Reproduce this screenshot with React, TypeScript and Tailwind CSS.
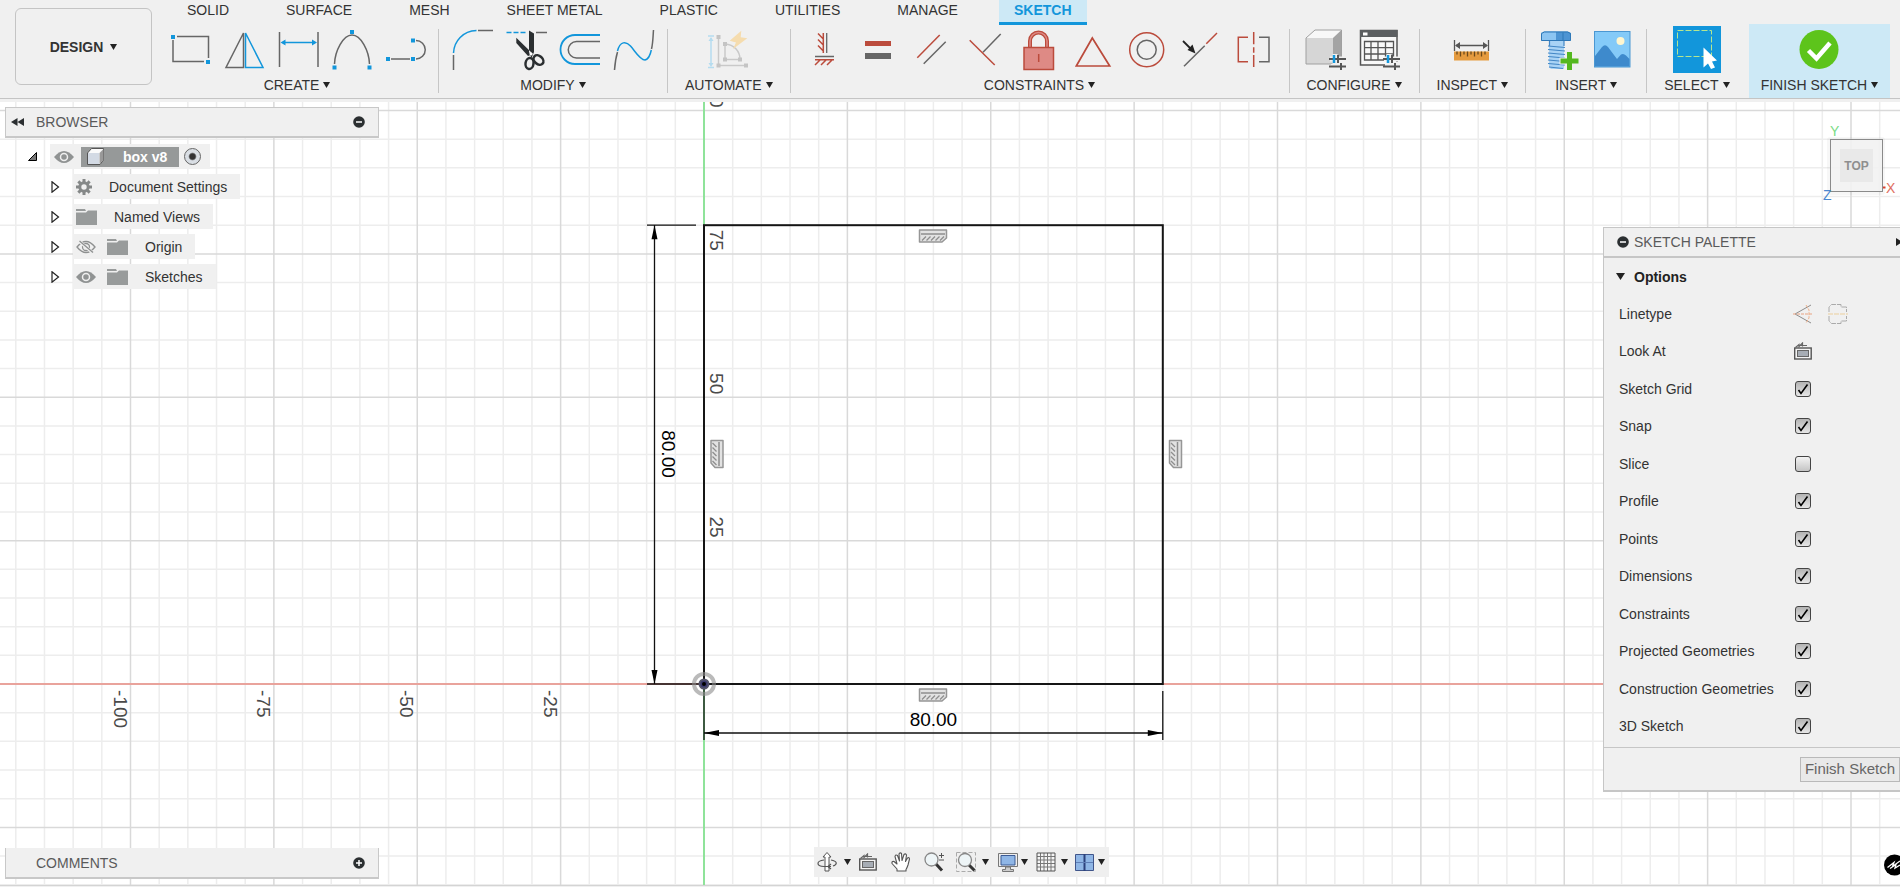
import React, { useState } from 'react';

const GRAY = '#666666';
const BLUE = '#1296db';
const RED = '#bb4b3c';

const tabs = ['SOLID', 'SURFACE', 'MESH', 'SHEET METAL', 'PLASTIC', 'UTILITIES', 'MANAGE', 'SKETCH'];

const Caret: React.FC = () => (
  <svg width="7" height="6" viewBox="0 0 7 6" className="shrink-0" aria-hidden="true">
    <path d="M0 0h7L3.5 6z" fill="#222" />
  </svg>
);

const Icon: React.FC<{ children: React.ReactNode }> = ({ children }) => (
  <svg width="54" height="44" viewBox="0 0 54 44" fill="none" strokeWidth="1.5" aria-hidden="true">
    {children}
  </svg>
);

const Dot: React.FC<{ x: number; y: number }> = ({ x, y }) => (
  <rect x={x - 2} y={y - 2} width="4" height="4" fill={BLUE} />
);

const Sliders: React.FC<{ x: number }> = ({ x }) => (
  <g>
    <path d={`M${x} 30h16M${x + 1} 37.5h15M${x + 5} 25v10M${x + 12} 33v9`} stroke="#f0f0f0" strokeWidth="5" />
    <path d={`M${x - 1} 30h17M${x - 1} 37.5h17`} stroke="#555" strokeWidth="2" />
    <path d={`M${x + 4} 26v8`} stroke={BLUE} strokeWidth="2.5" />
    <path d={`M${x + 8} 26v8M${x + 11} 34v7`} stroke="#555" strokeWidth="2" />
  </g>
);

const createTools: Record<string, React.ReactNode> = {
  Rectangle: (
    <>
      <path d="M14 7.5H45.5V29M10 11V32.5H41" stroke={GRAY} />
      <Dot x={10} y={8} /><Dot x={45} y={33} />
    </>
  ),
  Mirror: (
    <>
      <path d="M26.5 4V38.5H9z" stroke={GRAY} />
      <path d="M28.5 4V38.5H46z" stroke={BLUE} />
    </>
  ),
  'Sketch Dimension': (
    <>
      <path d="M8.5 3V38M47 3V38" stroke={GRAY} />
      <path d="M12 13.5H44" stroke={BLUE} />
      <path d="M9.500 13.500l5-3v6zM46 13.500l-5-3v6z" fill={BLUE} />
    </>
  ),
  Arc: (
    <>
      <path d="M9.500 35C10 22 18 6 27 6S44 22 44.500 35" stroke={GRAY} />
      <Dot x={9.5} y={38.5} /><Dot x={27} y={3} /><Dot x={44.5} y={38.5} />
    </>
  ),
  Slot: (
    <>
      <path d="M12 30H31M37 11.500A9.250 9.250 0 0 1 37 30" stroke={GRAY} />
      <Dot x={9} y={30} /><Dot x={34} y={30} /><Dot x={34} y={11.5} />
    </>
  ),
};

const modifyTools: Record<string, React.ReactNode> = {
  Fillet: (
    <>
      <path d="M7.500 24C8 12 17 2 30.500 1.500" stroke={BLUE} />
      <path d="M7.500 26V41M32 1.500H47" stroke={GRAY} />
    </>
  ),
  Trim: (
    <>
      <path d="M6.500 3.500H26" stroke={BLUE} strokeDasharray="5 2" />
      <path d="M36 3.500H47" stroke={GRAY} />
      <path d="M29 1.500L34 4.500V23L31.500 29L29 23zM16.300 8.700V14L28 27L33 25z" fill="#2b2f31" />
      <ellipse cx="29.500" cy="34.500" rx="4" ry="5.500" stroke="#2b2f31" strokeWidth="2.500" transform="rotate(8 29.500 34.500)" />
      <ellipse cx="38.500" cy="31" rx="4" ry="5.500" stroke="#2b2f31" strokeWidth="2.500" transform="rotate(-48 38.500 31)" />
      <circle cx="31" cy="25" r="1.500" fill="#fff" />
    </>
  ),
  Offset: (
    <>
      <path d="M46 6H21a14.500 14.500 0 0 0 0 29H46" stroke={BLUE} strokeWidth="1.800" />
      <path d="M46 12.500H22.500a8.250 8.250 0 0 0 0 16.500H46" stroke={GRAY} />
    </>
  ),
  Spline: (
    <>
      <path d="M6.500 41C7 34 8 28 9.500 23M43.500 20C45 14 45 7 45.500 1" stroke={GRAY} />
      <path d="M9.500 22C12 12 18 12 22.500 17S32 31 37 31C41 30 42.500 25 43.300 21" stroke={BLUE} />
    </>
  ),
};

const automateTools: Record<string, React.ReactNode> = {
  'Auto Constrain': (
    <>
      <path d="M8 9V36M5 7H11M5 38.500H11" stroke="#b5dcef" />
      <path d="M8 8l-2.500 4h5zM8 38l-2.500-4h5z" fill="#b5dcef" />
      <path d="M15.500 8V36.500H43M22 15V30.500H37C37 22 31 15.500 22 15" stroke="#c9c9c9" />
      <path d="M13.500 6h4v4h-4zM13.500 34.500h4v4h-4zM41 34.500h4v4h-4zM20 13h4v4h-4zM20 28.500h4v4h-4zM35 28.500h4v4h-4z" fill="#c4c4c4" />
      <path d="M38.300 1.700L26.700 11.700L33 13.500L30 20L44.300 9.300L37.700 8.300z" fill="#f5dcae" />
    </>
  ),
};

const constraintTools: Record<string, React.ReactNode> = {
  'Horizontal/Vertical': (
    <>
      <path d="M25.300 4V24M20 4.500L25.300 10M20 10.500L25.300 16M20 16.500L25.300 22M17 30.700H36M22 31L17 36M28 31L23 36M34 31L29 36" stroke={RED} />
      <path d="M28.700 4V24M17 27.500H36" stroke={GRAY} strokeWidth="1.300" />
    </>
  ),
  Equal: (
    <>
      <path d="M13 12h26v5H13z" fill={RED} />
      <path d="M13 24h26v6H13z" fill={GRAY} />
    </>
  ),
  Parallel: (
    <>
      <path d="M11.300 28.700L33.700 6" stroke={RED} />
      <path d="M17.700 34.700L39.700 12.700" stroke={GRAY} />
    </>
  ),
  Perpendicular: (
    <>
      <path d="M23 23.300L40.700 5" stroke={GRAY} />
      <path d="M9.700 11.300L34.700 36" stroke={RED} />
    </>
  ),
  Fix: (
    <>
      <path d="M16 18V12a8.500 8.500 0 0 1 17 0V18" stroke={RED} strokeWidth="4" />
      <path d="M16 18V12a8.500 8.500 0 0 1 17 0V18" stroke="#de8a85" strokeWidth="1.500" />
      <rect x="10" y="18.500" width="29.500" height="22" fill="#de8a85" stroke={RED} />
      <path d="M24.700 25V33" stroke={RED} />
    </>
  ),
  Tangent: <path d="M24.300 9L41.700 37H8.300z" stroke={RED} strokeWidth="1.700" />,
  Concentric: (
    <>
      <circle cx="24.700" cy="20.700" r="17" stroke={RED} />
      <circle cx="24.700" cy="20.700" r="9.500" stroke={GRAY} />
    </>
  ),
  Midpoint: (
    <>
      <path d="M8 37.300L28.700 16.700" stroke={GRAY} />
      <path d="M30.300 14.700L41 4" stroke={RED} />
      <path d="M7 12L15 20" stroke="#222" strokeWidth="1.800" />
      <path d="M19.500 24.500l-8-3.500 5-5.500z" fill="#222" />
    </>
  ),
  Symmetry: (
    <>
      <path d="M18 8.300H8.300V32.700H18M23.700 3V15.300M23.700 18.300V23.700M23.700 26V38" stroke={RED} />
      <path d="M29 8.300H39V32.700H29" stroke={GRAY} />
    </>
  ),
};

const configureTools: Record<string, React.ReactNode> = {
  'Configure Model': (
    <>
      <path d="M5 9h27v26H5z" fill="#d6d6d6" />
      <path d="M5 9L14 1H40.500L32 9z" fill="#f8f8f8" />
      <path d="M32 9L40.500 1V28L32 35z" fill="#a4a4a4" />
      <path d="M5 9L14 1H40.500V28L32 35H5z" stroke="#a0a0a0" strokeWidth="1" />
      <Sliders x={29} />
    </>
  ),
  'Configuration Table': (
    <>
      <path d="M5.500 1.500H42V36H5.500z" fill="#f8f8f8" stroke="#555" />
      <path d="M5 1H42.500V8H5z" fill="#5c5f61" />
      <path d="M8 3.500h4.500v3H8z" fill="#fff" />
      <path d="M9.500 12.500H38.500V31H9.500zM9.500 18.700H38.500M9.500 25H38.500M16 12.500V31M23 12.500V31M30.500 12.500V31" stroke="#555" strokeWidth="1.300" />
      <Sliders x={29} />
    </>
  ),
};

const inspectTools: Record<string, React.ReactNode> = {
  Measure: (
    <>
      <path d="M8.500 11V22M42.500 11V22M10 16.500H41" stroke="#555" strokeWidth="1.300" />
      <path d="M9 16.500l5-3.500v7zM42 16.500l-5-3.500v7z" fill="#555" />
      <path d="M8 22.500h35v9H8z" fill="#e59b3f" />
      <path d="M11 22.500v3M14.500 22.500v5M18 22.500v3M21.500 22.500v5M25 22.500v3M28.500 22.500v5M32 22.500v3M35.500 22.500v5M39 22.500v3" stroke="#6b4a1c" strokeWidth="1.300" />
    </>
  ),
};

const insertTools: Record<string, React.ReactNode> = {
  'Insert Fastener': (
    <>
      <path d="M8 4l3-1.500h24L38 4v7.500H8z" fill="#4d94d3" />
      <path d="M8 4l3-1.500h12V11.500H8z" fill="#8cc5f2" />
      <path d="M8.500 4.500l3-1.500h23l3 1.500V11.500h-29zM30 3.500V11.500" stroke="#2f78b7" strokeWidth="1" />
      <path d="M16 12h15v28H18l-2-2z" fill="#a9d3f5" />
      <path d="M15 17l17 1.500M15 20.500l17 1.500M15 24l17 1.500M15 27.500l17 1.500M15 31l17 1.500M15 34.500l17 1.500M16 38l14 1.500M16.500 12V17M31 12V17" stroke="#4286c5" strokeWidth="1.200" />
      <path d="M36.500 22V42M26.500 32H46.500" stroke="#f0f0f0" strokeWidth="7" />
      <path d="M36.500 23V41M27.500 32H45.500" stroke="#54b81f" strokeWidth="5" />
    </>
  ),
  'Insert Image': (
    <>
      <rect x="7.500" y="2.500" width="35.500" height="35.500" fill="#84caf8" stroke="#4b97d2" strokeWidth="1" />
      <circle cx="33.500" cy="12" r="4" fill="#fff6d0" />
      <path d="M8 27L15 18Q18 14.500 21 18L30 30L34 25.500Q36.500 24 39 26.500L42.500 30V37.500H8z" fill="#3e8acc" />
    </>
  ),
};

interface GroupProps {
  label: string;
  tools: Record<string, React.ReactNode>;
}

const ToolGroup: React.FC<GroupProps> = ({ label, tools }) => (
  <section className="mt-1 mb-[5px] flex flex-col items-center border-r border-[#c6c6c6]" aria-label={label}>
    <div className="flex pr-[5px] pl-[7px]">
      {Object.entries(tools).map(([name, art]) => (
        <button key={name} type="button" aria-label={name} className="h-11 w-[54px]">
          <Icon>{art}</Icon>
        </button>
      ))}
    </div>
    <GroupLabel label={label} />
  </section>
);

const GroupLabel: React.FC<{ label: string }> = ({ label }) => (
  <button type="button" className="mt-1 flex items-center gap-1 px-[17px] leading-4 whitespace-nowrap">
    {label}
    <Caret />
  </button>
);

const Header: React.FC = () => (
  <header className="flex shrink-0 border-b-[3px] border-[#f0f0f0]">
    <div className="flex w-full border-b border-[#c4c4c4] bg-[#f0f0f0]">
      <button
        type="button"
        className="mt-2 mr-1 mb-[13px] ml-[15px] flex w-[137px] shrink-0 items-center justify-center gap-[7px] rounded-md border border-[#c4c4c4] font-bold"
      >
        DESIGN
        <Caret />
      </button>
      <div className="min-w-0 flex-1">
        <nav className="flex h-[25px] gap-[25px] pl-[15px]">
          {tabs.map((tab) => (
            <button
              key={tab}
              type="button"
              className={
                tab === 'SKETCH'
                  ? 'border-b-[3px] border-[#1296db] bg-[#cde9f6] px-[15px] pt-[2px] pb-1 leading-4 font-bold text-[#1296db]'
                  : 'border-b-[3px] border-transparent px-4 pt-[2px] pb-1 leading-4 whitespace-nowrap'
              }
            >
              {tab}
            </button>
          ))}
        </nav>
        <div className="flex h-[73px]">
          <ToolGroup label="CREATE" tools={createTools} />
          <ToolGroup label="MODIFY" tools={modifyTools} />
          <ToolGroup label="AUTOMATE" tools={automateTools} />
          <ToolGroup label="CONSTRAINTS" tools={constraintTools} />
          <ToolGroup label="CONFIGURE" tools={configureTools} />
          <ToolGroup label="INSPECT" tools={inspectTools} />
          <ToolGroup label="INSERT" tools={insertTools} />
          <section className="mt-px flex flex-col items-center" aria-label="SELECT">
            <button type="button" aria-label="Select" className="h-[47px] w-12 bg-[#1296db]">
              <svg width="48" height="47" viewBox="0 0 48 47" fill="none" aria-hidden="true">
                <rect x="4.500" y="4.500" width="34" height="26" stroke="#b5e68f" strokeDasharray="6 2" />
                <path d="M30.500 21.500V41.500L35 37.500L38 43L42 41.500L39 35.500L44 34.500z" fill="#fff" />
              </svg>
            </button>
            <GroupLabel label="SELECT" />
          </section>
          <section className="-mt-px ml-0.5 flex flex-col items-center bg-[#cde9f6]" aria-label="FINISH SKETCH">
            <button type="button" aria-label="Finish Sketch" className="mt-[5px] h-11 w-[54px]">
              <Icon>
                <circle cx="27" cy="20.500" r="19.500" fill="#5dc41b" />
                <path d="M16.500 21.500l8 8L38 14" stroke="#fff" strokeWidth="4.500" />
              </Icon>
            </button>
            <button type="button" className="mt-1 flex items-center gap-1 px-3 leading-4 whitespace-nowrap">
              FINISH SKETCH
              <Caret />
            </button>
          </section>
        </div>
      </div>
    </div>
  </header>
);

// Sketch space: pixels per unit and where the origin sits on the canvas
const UNIT = 5.735;
const ORIGIN = { x: 704, y: 582 };
const SIZE = 80 * UNIT;

const ConstraintBadge: React.FC<{ transform: string }> = ({ transform }) => (
  <g transform={transform}>
    <path d="M-13.500 -6H13.500V2L9 6H-13.500z" fill="#e2e2e2" stroke="#969696" strokeWidth="1.500" strokeLinejoin="round" />
    <path d="M-12 -2H12" stroke="#8e8e8e" strokeWidth="1.500" />
    <path d="M-11 4.500l4-4M-6.500 4.500l4-4M-2 4.500l4-4M2.500 4.500l4-4M7 4.500l4-4" stroke="#8e8e8e" strokeWidth="1.300" />
  </g>
);

const Canvas: React.FC = () => {
  const { x: ox, y: oy } = ORIGIN;
  const right = ox + SIZE;
  const top = oy - SIZE;
  const columns = Array.from({ length: 90 }, (_, i) => i - 24);
  const rows = Array.from({ length: 60 }, (_, i) => i - 30);
  const minor = '#ededed';
  const major = '#d9d9d9';

  return (
    <svg className="absolute inset-0 h-full w-full" fontFamily="'Liberation Sans', sans-serif" fontSize="19" aria-label="Sketch canvas">
      <g strokeWidth="1.500">
        {columns.filter((i) => i % 5).map((i) => (
          <line key={`c${i}`} x1={ox + i * 5 * UNIT} x2={ox + i * 5 * UNIT} y1="0" y2="100%" stroke={minor} />
        ))}
        {rows.filter((i) => i % 5).map((i) => (
          <line key={`r${i}`} x1="0" x2="100%" y1={oy + i * 5 * UNIT} y2={oy + i * 5 * UNIT} stroke={minor} />
        ))}
        {columns.filter((i) => i % 5 === 0).map((i) => (
          <line key={`C${i}`} x1={ox + i * 5 * UNIT} x2={ox + i * 5 * UNIT} y1="0" y2="100%" stroke={major} />
        ))}
        {rows.filter((i) => i % 5 === 0).map((i) => (
          <line key={`R${i}`} x1="0" x2="100%" y1={oy + i * 5 * UNIT} y2={oy + i * 5 * UNIT} stroke={major} />
        ))}
      </g>
      <line x1="0" x2="100%" y1={oy} y2={oy} stroke="#e9a39c" strokeWidth="2" />
      <line x1={ox} x2={ox} y1="0" y2="100%" stroke="#8fe39a" strokeWidth="2" />

      <g fill="#4a4a4a">
        {[25, 50, 75, 100].map((n) => (
          <text key={n} textAnchor="end" transform={`translate(${ox + 6} ${oy - n * UNIT - 3}) rotate(90)`}>{n}</text>
        ))}
        {[-25, -50, -75, -100].map((n) => (
          <text key={n} transform={`translate(${ox + n * UNIT - 17} ${oy + 6}) rotate(90)`}>{n}</text>
        ))}
      </g>

      <rect x={ox} y={top} width={SIZE} height={SIZE} fill="none" stroke="#151515" strokeWidth="2" />

      <g stroke="#111" strokeWidth="1.300">
        <path d={`M647 ${top}H696M647 ${oy}H${ox}M654.500 ${top}V${oy}`} />
        <path d={`M${ox} ${oy}V638M${right} 589V638M${ox} 631H${right}`} />
      </g>
      <g fill="#000">
        <path d={`M654.500 ${top}l-3 14h6zM654.500 ${oy}l-3-14h6z`} />
        <path d={`M${ox} 631l15-3v6zM${right} 631l-15-3v6z`} />
        <text x={ox + SIZE / 2} y="624" textAnchor="middle">80.00</text>
        <text textAnchor="middle" transform="translate(662 352) rotate(90)">80.00</text>
      </g>

      <ConstraintBadge transform="translate(933 134)" />
      <ConstraintBadge transform="translate(933 593)" />
      <ConstraintBadge transform="translate(717 352) rotate(90)" />
      <ConstraintBadge transform="translate(1175.500 352) rotate(90)" />

      <circle cx={ox} cy={oy} r="10" fill="none" stroke="#8c8c8c" strokeOpacity="0.600" strokeWidth="4" />
      <circle cx={ox} cy={oy} r="4.500" fill="#3b3a6e" stroke="#55556a" strokeWidth="2" />
      <circle cx={ox} cy={oy} r="2" fill="#000" />
    </svg>
  );
};

const ViewCube: React.FC = () => (
  <svg width="72" height="80" viewBox="0 0 72 80" className="absolute top-5 right-0 overflow-visible" fontFamily="'Liberation Sans Narrow', 'Liberation Sans', sans-serif" aria-label="View cube">
    <rect x="-1" y="15" width="58" height="58" rx="3" fill="#000" fillOpacity="0.030" />
    <rect x="2.500" y="17.500" width="52" height="52" fill="#f2f2f2" fillOpacity="0.900" stroke="#8a8a8a" />
    <rect x="12" y="27" width="33" height="33" fill="#e9e9e9" />
    <text x="28.500" y="48" textAnchor="middle" fontSize="12" fontWeight="bold" fill="#8f8f8f">TOP</text>
    <text x="2" y="14" fontSize="14" fill="#79dc86">Y</text>
    <text x="-5" y="78" fontSize="14" fill="#4a86cf">Z</text>
    <text x="58" y="71" fontSize="14" fill="#e0705f">X</text>
    <path d="M55 65.500h2.500" stroke="#d9402e" strokeWidth="2" />
  </svg>
);

const RoundSign: React.FC<{ plus?: boolean }> = ({ plus }) => (
  <svg width="12" height="12" viewBox="0 0 12 12" aria-hidden="true">
    <circle cx="6" cy="6" r="5.800" fill="#2b2f31" />
    <path d={plus ? 'M3 6h6M6 3v6' : 'M3 6h6'} stroke="#fff" strokeWidth="1.500" />
  </svg>
);

const Eye: React.FC<{ off?: boolean }> = ({ off }) => (
  <svg width="20" height="14" viewBox="0 0 20 14" fill="none" aria-hidden="true">
    {off ? (
      <>
        <path d="M1 7Q10 -4 19 7Q10 18 1 7z" stroke="#8e9090" strokeWidth="1.300" />
        <circle cx="10" cy="7" r="3.500" stroke="#8e9090" strokeWidth="1.300" />
        <path d="M3 1L17 13" stroke="#efefef" strokeWidth="3" />
        <path d="M3.500 1L17 12.500" stroke="#8e9090" strokeWidth="1.300" />
      </>
    ) : (
      <>
        <path d="M0 7Q10 -5 20 7Q10 19 0 7z" fill="#909393" />
        <circle cx="10" cy="7" r="3.500" fill="#909393" stroke="#efefef" strokeWidth="1.500" />
      </>
    )}
  </svg>
);

const Folder: React.FC = () => (
  <svg width="21" height="16" viewBox="0 0 21 16" aria-hidden="true">
    <path d="M0 0h9l1 2H0zM0 3.500h10L12 1.500h9V16H0z" fill="#989b9b" />
  </svg>
);

const Gear: React.FC = () => (
  <svg width="16" height="16" viewBox="-8 -8 16 16" fill="none" aria-hidden="true">
    <circle r="4.200" stroke="#858888" strokeWidth="3" />
    {[0, 45, 90, 135].map((a) => (
      <path key={a} d="M0 -8V-5M0 5V8" stroke="#858888" strokeWidth="3" transform={`rotate(${a})`} />
    ))}
  </svg>
);

interface TreeNode {
  name: string;
  icon: 'gear' | 'folder';
  visible?: boolean;
}

const nodes: TreeNode[] = [
  { name: 'Document Settings', icon: 'gear' },
  { name: 'Named Views', icon: 'folder' },
  { name: 'Origin', icon: 'folder', visible: false },
  { name: 'Sketches', icon: 'folder', visible: true },
];

const BrowserPanel: React.FC = () => (
  <section className="w-[374px]">
    <div className="flex h-[31px] items-center border border-b-2 border-[#c8c8c8] bg-[#f0f0f0] pr-[13px] pl-[5px]">
      <button type="button" aria-label="Collapse browser">
        <svg width="13" height="8" viewBox="0 0 13 8" aria-hidden="true">
          <path d="M6.500 0v8L0 4zM13 0v8L6.500 4z" fill="#2b2f31" />
        </svg>
      </button>
      <h2 className="ml-3 flex-1 text-[#5a5a5a]">BROWSER</h2>
      <button type="button" aria-label="Minimize browser"><RoundSign /></button>
    </div>
    <div className="mt-[6px] ml-[23px] flex h-[25px] items-center">
      <button type="button" aria-label="Collapse box v8">
        <svg width="9" height="9" viewBox="0 0 9 9" aria-hidden="true">
          <path d="M8.500 .5V8.500H.5z" fill="#777" stroke="#000" />
        </svg>
      </button>
      <div className="ml-[13px] flex h-full items-center bg-[#f0f0f0] pr-[9px] pl-1">
        <button type="button" aria-label="Hide box v8"><Eye /></button>
        <span className="ml-[7px] flex h-5 items-center bg-[#969999] pr-3 pl-[6px] font-bold text-white">
          <svg width="17" height="17" viewBox="0 0 17 17" className="mr-[19px]" aria-hidden="true">
            <path d="M.5 5L4.500 .5H16.500V12L13 16.500H.5z" fill="#fafafa" stroke="#555" />
            <path d="M1 5h11v11H1z" fill="#d3dae4" />
            <path d="M12.500 5l4-4V12l-4 4z" fill="#999" />
          </svg>
          box v8
        </span>
        <input
          type="radio"
          defaultChecked
          aria-label="Activate box v8"
          className="ml-[5px] h-[17px] w-[17px] appearance-none rounded-full border border-[#666] bg-radial from-[#333] from-25% to-[#d9dee4] to-40%"
        />
      </div>
    </div>
    <ul className="mt-[5px] ml-[46px] flex flex-col gap-[5px]">
      {nodes.map((node) => (
        <li key={node.name} className="flex h-[25px] items-center">
          <button type="button" aria-label={`Expand ${node.name}`}>
            <svg width="9" height="12" viewBox="0 0 9 12" aria-hidden="true">
              <path d="M1 .8L7.500 6L1 11.200z" fill="#fff" stroke="#222" strokeWidth="1.200" />
            </svg>
          </button>
          <div className="ml-[13px] flex h-full items-center bg-[#f0f0f0] pr-[13px] pl-[3px]">
            {node.visible !== undefined && (
              <button type="button" aria-label={`Toggle ${node.name}`} className="mr-[11px]">
                <Eye off={!node.visible} />
              </button>
            )}
            {node.icon === 'gear' ? <Gear /> : <Folder />}
            <span className="ml-[17px]">{node.name}</span>
          </div>
        </li>
      ))}
    </ul>
  </section>
);

const LookAtIcon: React.FC = () => (
  <svg width="18" height="18" viewBox="0 0 18 18" fill="none" aria-hidden="true">
    <rect x=".7" y="6" width="16.500" height="11" fill="#f4f4f4" stroke="#555" strokeWidth="1.400" />
    <rect x="3.500" y="8.500" width="11" height="6" fill="#a7adb5" stroke="#666" />
    <path d="M1.500 5.500L5 2.500V4.500L8.500 1V4.500M6 3.500H13" stroke="#666" strokeWidth="1.200" />
  </svg>
);

const options = [
  'Sketch Grid', 'Snap', 'Slice', 'Profile', 'Points', 'Dimensions',
  'Constraints', 'Projected Geometries', 'Construction Geometries', '3D Sketch',
];

const SketchPalette: React.FC = () => {
  const [checked, setChecked] = useState<string[]>(options.filter((o) => o !== 'Slice'));
  const toggle = (name: string) =>
    setChecked((list) => (list.includes(name) ? list.filter((o) => o !== name) : [...list, name]));

  return (
    <section className="mt-[125px] w-[297px] self-start border border-r-0 border-b-2 border-[#c6c6c6] bg-[#f0f0f0]">
      <div className="flex h-[30px] items-center border-b-2 border-[#c6c6c6] pl-[13px]">
        <button type="button" aria-label="Minimize palette"><RoundSign /></button>
        <h2 className="ml-[5px] flex-1 text-[#5a5a5a]">SKETCH PALETTE</h2>
        <button type="button" aria-label="Expand palette">
          <svg width="4" height="8" viewBox="0 0 4 8" aria-hidden="true"><path d="M0 0L4 2.500V5.500L0 8z" fill="#222" /></svg>
        </button>
      </div>
      <button type="button" className="flex h-[37px] items-center gap-[9px] pl-3 font-bold text-[#222]">
        <svg width="9" height="7" viewBox="0 0 9 7" aria-hidden="true"><path d="M0 0h9L4.500 7z" fill="#222" /></svg>
        Options
      </button>
      <div className="mb-[2px] flex h-[450px] flex-col pl-[15px]">
        <div className="flex flex-1 items-center">
          <span className="w-[174px]">Linetype</span>
          <button type="button" aria-label="Construction" className="mr-[15px]">
            <svg width="20" height="20" viewBox="0 0 20 20" fill="none" aria-hidden="true">
              <path d="M18 1L2 10L18 19" stroke="#8d8d8d" />
              <path d="M0 10H20" stroke="#e8a483" strokeDasharray="3 1" />
              <path d="M13 1L16 6V14L13 19" stroke="#efb18c" strokeDasharray="3 1" />
            </svg>
          </button>
          <button type="button" aria-label="Centerline">
            <svg width="20" height="20" viewBox="0 0 20 20" fill="none" aria-hidden="true">
              <path d="M1 8V3L3.500 .5H13V3H18.500V8M1 12V17L3.500 19.500H13V17H18.500V12" stroke="#aaa" strokeDasharray="6 1" />
              <path d="M0 10H20" stroke="#eccf9c" strokeDasharray="5 1" />
            </svg>
          </button>
        </div>
        <div className="flex flex-1 items-center">
          <span className="w-[175px]">Look At</span>
          <button type="button" aria-label="Look At"><LookAtIcon /></button>
        </div>
        {options.map((name) => (
          <label key={name} className="flex flex-1 items-center">
            <span className="w-44">{name}</span>
            <span className="relative h-4 w-4">
              <input
                type="checkbox"
                checked={checked.includes(name)}
                onChange={() => toggle(name)}
                className="peer block h-4 w-4 appearance-none rounded-[3px] border border-[#444] bg-linear-to-b from-[#f4f4f4] to-[#c4c4c4] checked:from-[#b4b4b4] checked:to-[#e6e6e6]"
              />
              <svg width="16" height="16" viewBox="0 0 16 16" fill="none" className="pointer-events-none absolute inset-0 hidden peer-checked:block" aria-hidden="true">
                <path d="M3.500 9L6 12.500L12.500 3.500" stroke="#000" strokeWidth="1.600" />
              </svg>
            </span>
          </label>
        ))}
      </div>
      <div className="flex h-[43px] items-center justify-end border-t border-[#c6c6c6]">
        <button type="button" className="h-[25px] border border-[#b9b9b9] bg-[#e9e9e9] px-1 text-[15px] text-[#666]">Finish Sketch</button>
      </div>
    </section>
  );
};

const NavBar: React.FC = () => (
  <div className="flex h-[30px] items-center bg-[#efefef] pr-1 pl-[3px]">
    <button type="button" aria-label="Orbit" className="flex items-center gap-[7px]">
      <svg width="20" height="20" viewBox="0 0 20 20" fill="none" stroke="#555" aria-hidden="true">
        <path d="M8 19V5H6L10 .5L14 5H12V19z" fill="#fff" />
        <path d="M7 8C-1 9 -1 14 7 14.500H14M14 8C20 9 21 12 16 14M14 12l-3 2.500 3 2.500" strokeWidth="1.200" />
      </svg>
      <Caret />
    </button>
    <button type="button" aria-label="Look At" className="ml-2"><LookAtIcon /></button>
    <button type="button" aria-label="Pan" className="ml-[14px]">
      <svg width="20" height="20" viewBox="0 0 20 20" fill="#fff" stroke="#555" strokeWidth="1.100" strokeLinejoin="round" aria-hidden="true">
        <path d="M6 19V17L1 11.500Q.5 9 3 9.500L6 12L4 4.500Q4.500 2 6.500 3.500L8.500 9L8 2Q9 0 10.500 1.500L11 8.500L13 2.500Q14.500 1 15.500 3L14.500 9.500L16.500 6Q18.500 5 18.500 7L17 13Q16 16 15 17.500V19z" />
      </svg>
    </button>
    <button type="button" aria-label="Zoom" className="ml-[13px]">
      <svg width="20" height="20" viewBox="0 0 20 20" fill="none" aria-hidden="true">
        <path d="M12 12L18 18.500" stroke="#333" strokeWidth="3" />
        <circle cx="7.500" cy="7.500" r="6.500" fill="#eef5f7" stroke="#888" strokeWidth="1.300" />
        <path d="M17.500 1V6M15 3.500H20M15 8H20" stroke="#555" />
      </svg>
    </button>
    <button type="button" aria-label="Zoom Window" className="ml-3 flex items-center gap-[6px]">
      <svg width="20" height="20" viewBox="0 0 20 20" fill="none" aria-hidden="true">
        <rect x=".5" y=".5" width="19" height="19" stroke="#aaa" strokeDasharray="4 2" />
        <path d="M13 13L18.500 18.500" stroke="#333" strokeWidth="3" />
        <circle cx="9" cy="8" r="6.500" fill="#eef5f7" stroke="#888" strokeWidth="1.300" />
      </svg>
      <Caret />
    </button>
    <button type="button" aria-label="Display Settings" className="ml-[9px] flex items-center gap-[3px]">
      <svg width="20" height="19" viewBox="0 0 20 19" aria-hidden="true">
        <path d="M.5 .5h19v13H.5z" fill="#eee" stroke="#777" />
        <path d="M3 2.500h14v9.500H3z" fill="#8fb6e6" stroke="#3b5a94" />
        <path d="M7.500 14h5v2.500h3V18.500h-11V16.500h3z" fill="#ccc" stroke="#777" />
      </svg>
      <Caret />
    </button>
    <button type="button" aria-label="Grid and Snaps" className="ml-2 flex items-center gap-[5px]">
      <svg width="20" height="20" viewBox="0 0 20 20" fill="none" aria-hidden="true">
        <path d="M1 1h18v18H1z" fill="#f4f4f4" />
        <path d="M1 4.500H19M1 8H19M1 11.500H19M1 15H19M4.500 1V19M8 1V19M11.500 1V19M15 1V19" stroke="#777" />
        <path d="M1 1h18v18H1z" stroke="#555" />
      </svg>
      <Caret />
    </button>
    <button type="button" aria-label="Viewports" className="ml-[7px] flex items-center gap-1">
      <svg width="19" height="17" viewBox="0 0 19 17" fill="none" aria-hidden="true">
        <path d="M.5 .5h18v16H.5z" fill="#8fb6e6" stroke="#40558a" />
        <path d="M9.500 0V17" stroke="#2c427d" strokeWidth="2" />
        <path d="M1 8.500H18" stroke="#5f7fb7" />
      </svg>
      <Caret />
    </button>
  </div>
);

export default function App() {
  return (
    <div className="flex h-screen flex-col overflow-hidden bg-white font-['Liberation_Sans',sans-serif] text-sm text-[#333]">
      <Header />
      <main className="relative flex min-h-0 flex-1 justify-between overflow-hidden">
        <Canvas />
        <div className="relative flex flex-col justify-between pt-[5px] pb-[6px] pl-[5px]">
          <BrowserPanel />
          <section className="flex h-[31px] w-[374px] items-center border-x border-b-2 border-[#c8c8c8] bg-[#f0f0f0] pr-[13px] pl-[30px]">
            <h2 className="flex-1 text-[#5a5a5a]">COMMENTS</h2>
            <button type="button" aria-label="Add comment"><RoundSign plus /></button>
          </section>
        </div>
        <div className="absolute inset-x-0 bottom-2 flex justify-center pl-[22px]">
          <NavBar />
        </div>
        <div className="relative flex">
          <ViewCube />
          <SketchPalette />
        </div>
        <button type="button" aria-label="Assistant" className="absolute right-0 bottom-[9px]">
          <svg width="16" height="22" viewBox="0 0 16 22" fill="none" aria-hidden="true">
            <circle cx="10.500" cy="11" r="10.500" fill="#000" />
            <path d="M3.500 13.500L10 8.500L8.500 12.500L16 7M6 14.500L12 10.500L11 14L16 11" stroke="#fff" strokeWidth="1.300" />
          </svg>
        </button>
      </main>
      <footer className="h-[2px] shrink-0 border-t border-[#d4d4d4] bg-[#f0f0f0]" />
    </div>
  );
}
